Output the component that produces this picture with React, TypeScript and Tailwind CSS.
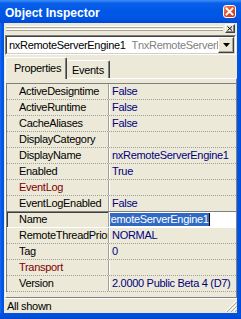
import React from "react";

type Row = { n: string; v: string; red?: boolean; sel?: boolean };

const rows: Row[] = [
  { n: "ActiveDesigntime", v: "False" },
  { n: "ActiveRuntime", v: "False" },
  { n: "CacheAliases", v: "False" },
  { n: "DisplayCategory", v: "" },
  { n: "DisplayName", v: "nxRemoteServerEngine1" },
  { n: "Enabled", v: "True" },
  { n: "EventLog", v: "", red: true },
  { n: "EventLogEnabled", v: "False" },
  { n: "Name", v: "nxRemoteServerEngine1", sel: true },
  { n: "RemoteThreadPriority", v: "NORMAL" },
  { n: "Tag", v: "0" },
  { n: "Transport", v: "", red: true },
  { n: "Version", v: "2.0000 Public Beta 4 (D7)" },
];

function CloseButton() {
  return (
    <div className="w-[13px] h-[13px] rounded-[3px] border border-white bg-[linear-gradient(135deg,#f0896a_0%,#e0522d_45%,#c43a16_100%)] flex items-center justify-center">
      <svg width="9" height="9" viewBox="0 0 9 9">
        <path d="M1.5 1.5 L7.5 7.5 M7.5 1.5 L1.5 7.5" stroke="#ffffff" strokeWidth="1.8" strokeLinecap="square" />
      </svg>
    </div>
  );
}

function SmallClose() {
  return (
    <div className="w-[10px] h-[9px] bg-[#ECE9D8] border-t border-l border-white border-r border-b border-r-[#404040] border-b-[#404040] shadow-[inset_-1px_-1px_0_#808080] flex items-center justify-center">
      <svg width="6" height="5" viewBox="0 0 6 5">
        <path d="M0.5 0.5 L5 4.5 M5 0.5 L0.5 4.5" stroke="#000000" strokeWidth="1" />
      </svg>
    </div>
  );
}

function GridRow({ r, beforeSel }: { r: Row; beforeSel: boolean }) {
  const border = beforeSel
    ? "border-solid border-[#808080]"
    : r.sel
    ? "border-solid border-white"
    : "border-dotted border-[#a0a0a0]";
  return (
    <div
      className={`flex h-[16px] border-b ${border} ${
        r.sel ? "shadow-[inset_1px_1px_0_#404040]" : ""
      }`}
    >
      <div
        className={`w-[102px] shrink-0 pl-[12px] border-r border-solid border-[#a0a0a0] overflow-hidden whitespace-nowrap leading-[15px] ${
          r.red ? "text-[#800000]" : "text-black"
        }`}
      >
        {r.n}
      </div>
      {r.sel ? (
        <div className="flex-1 min-w-0 bg-white border-l border-solid border-white pl-[1px] overflow-hidden whitespace-nowrap flex items-center">
          <span className="-ml-[19px] bg-[#316ac5] text-white leading-[13px]">{r.v}</span>
          <span className="w-[1px] h-[13px] bg-black shrink-0"></span>
        </div>
      ) : (
        <div className="flex-1 min-w-0 border-l border-solid border-white pl-[2px] overflow-hidden whitespace-nowrap leading-[15px] text-[#000080]">
          {r.v}
        </div>
      )}
    </div>
  );
}

export default function App() {
  return (
    <div className="w-[241px] h-[319px] overflow-hidden flex flex-col bg-[#0055e5] text-[11px] tracking-[-0.3px] font-['Liberation_Sans',Arial,sans-serif]">
      {/* Title bar */}
      <div className="h-[23px] shrink-0 flex items-center pl-[5px] pr-[5px] bg-[linear-gradient(to_bottom,#3d8ff8_0%,#0a5fe8_14%,#0058e6_45%,#0055e5_75%,#004ad8_100%)]">
        <span className="flex-1 pt-[2px] text-white font-bold text-[12px] tracking-normal leading-[14px]">
          Object Inspector
        </span>
        <CloseButton />
      </div>

      {/* Body */}
      <div className="flex-1 min-h-0 flex px-[4px] bg-[linear-gradient(to_right,#1a6bf0_0px,#0055e5_2px,#0055e5_calc(100%-2px),#0048d6_100%)]">
        <div className="flex-1 min-w-0 flex flex-col bg-[#ECE9D8]">
          {/* Grip row */}
          <div className="mt-[1px] h-[9px] flex pl-[2px] pr-[2px] gap-[2px]">
            <div className="flex-1 flex flex-col pt-[2px] gap-[1px]">
              <div className="h-[2px] border-t border-b border-t-white border-b-[#aca899]"></div>
              <div className="h-[2px] border-t border-b border-t-white border-b-[#aca899]"></div>
            </div>
            <SmallClose />
          </div>

          {/* Combo */}
          <div className="mt-[2px] ml-[1px] mr-[1px] h-[20px] flex border border-t-[#808080] border-l-[#808080] border-r-white border-b-white">
            <div className="flex-1 min-w-0 flex bg-white border border-t-[#404040] border-l-[#404040] border-r-[#d4d0c8] border-b-[#d4d0c8]">
              <div className="flex-1 min-w-0 flex items-center pl-[2px] overflow-hidden whitespace-nowrap leading-[16px]">
                <span className="text-black">nxRemoteServerEngine1</span>
                <span className="ml-[6px] text-[#808080]">TnxRemoteServerEngine</span>
              </div>
              <div className="w-[16px] h-[16px] shrink-0 bg-[#ECE9D8] border border-t-white border-l-white border-r-[#404040] border-b-[#404040] shadow-[inset_-1px_-1px_0_#aca899] flex items-center justify-center">
                <svg width="7" height="4" viewBox="0 0 7 4">
                  <path d="M0 0 H7 L3.5 4 Z" fill="#000000" />
                </svg>
              </div>
            </div>
          </div>

          {/* Tabs */}
          <div className="mt-[2px] ml-[1px] h-[21px] flex items-end">
            <div className="relative z-10 -mb-[1px] h-[22px] w-[62px] bg-[#ECE9D8] border-t border-l border-r border-t-white border-l-white border-r-[#404040] rounded-t-[2px] shadow-[inset_-1px_0_0_#808080] flex items-center pl-[8px] leading-[13px] text-black">
              Properties
            </div>
            <div className="h-[18px] w-[43px] border-t border-r border-t-white border-r-[#404040] rounded-tr-[2px] shadow-[inset_-1px_0_0_#808080] flex items-center pl-[5px] pt-[1px] leading-[13px] text-black">
              Events
            </div>
          </div>

          {/* Panel */}
          <div className="ml-[1px] h-[220px] shrink-0 flex flex-col border-t border-l border-r border-b border-t-white border-l-white border-r-[#808080] border-b-[#808080] pt-[4px]">
            <div className="border-t border-l border-[#808080]">
              {rows.map((r, i) => (
                <GridRow key={r.n} r={r} beforeSel={!!rows[i + 1]?.sel} />
              ))}
            </div>
          </div>

          {/* Status bar */}
          <div className="flex-1 min-h-0 flex items-center border-t border-white pl-[3px] relative">
            <span className="flex-1 leading-[13px] text-black">All shown</span>
            <svg width="12" height="12" viewBox="0 0 12 12" className="self-end mr-[0px] mb-[1px]">
              <path d="M11 1 L1 11 M11 5 L5 11 M11 9 L9 11" stroke="#ffffff" strokeWidth="1" />
              <path d="M12 2 L2 12 M12 6 L6 12 M12 10 L10 12" stroke="#aca899" strokeWidth="1" />
            </svg>
          </div>
        </div>
      </div>
      <div className="h-[6px] shrink-0 bg-[linear-gradient(to_bottom,#0055e5_0%,#0046d2_100%)]"></div>
    </div>
  );
}
